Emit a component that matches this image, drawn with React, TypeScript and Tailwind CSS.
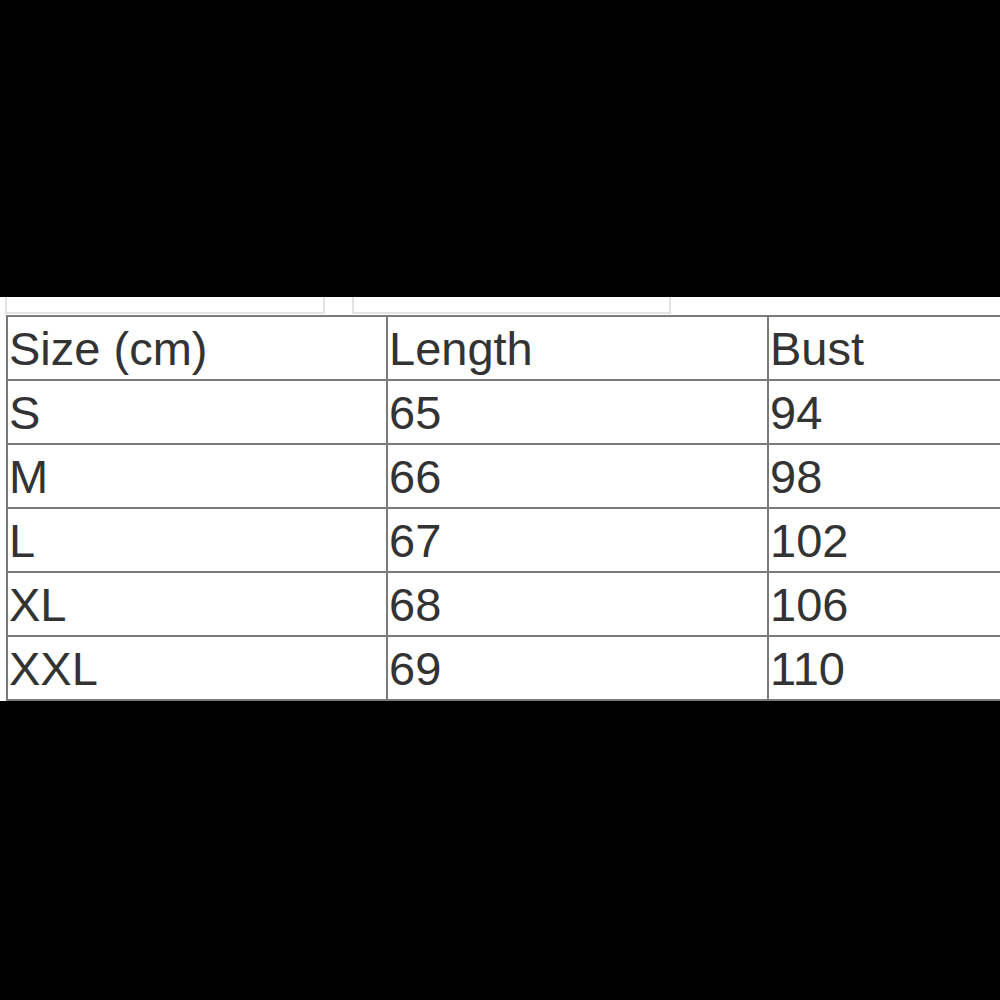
import React from 'react';

const ROWS: string[][] = [
    ['Size (cm)', 'Length', 'Bust'],
    ['S', '65', '94'],
    ['M', '66', '98'],
    ['L', '67', '102'],
    ['XL', '68', '106'],
    ['XXL', '69', '110'],
];

const COL_WIDTHS = ['w-[380px]', 'w-[381px]', 'w-[381px]'];

export default function App() {
    return (
        <div className="w-[1000px] h-[1000px] bg-black flex flex-col overflow-hidden" style={{ fontFamily: '"Liberation Sans", Arial, sans-serif' }}>
            <div className="h-[297px] shrink-0" />

            <div className="h-[404px] shrink-0 bg-white flex flex-col overflow-hidden">
                {/* faint boxes left over above the chart */}
                <div className="h-[17px] shrink-0 flex pl-[5px] gap-[27px]">
                    <div className="w-[320px] h-full border-l-2 border-r-2 border-b-2 border-[#e3e3e3]" />
                    <div className="w-[319px] h-full border-l-2 border-r-2 border-b-2 border-[#e3e3e3]" />
                </div>

                {/* size chart */}
                <div className="mt-[1px] ml-[6px] w-[1200px] border-t-2 border-l-2 border-[#7a7a7a]">
                    {ROWS.map((row, i) => (
                        <div key={i} className="flex h-[64px]">
                            {row.map((cell, j) => (
                                <div key={j} className={`${COL_WIDTHS[j]} shrink-0 h-full border-r-2 border-b-2 border-[#7a7a7a] flex items-center pl-[1px] text-[47px] leading-none text-[#333333]`}>
                                    {cell}
                                </div>
                            ))}
                        </div>
                    ))}
                </div>
            </div>
        </div>
    );
}
